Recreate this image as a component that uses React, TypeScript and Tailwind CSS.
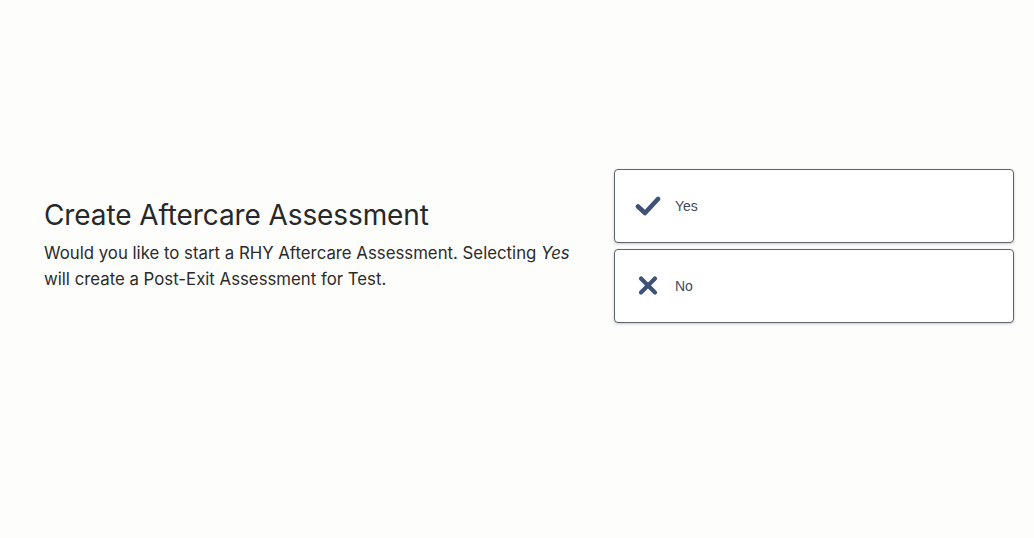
import React from "react";

function Check() {
  return (
    <svg width="26" height="22" viewBox="0 0 26 22" className="shrink-0">
      <path d="M3 11.5 L10 18 L23 4" fill="none" stroke="#3e5276" strokeWidth="4.6" strokeLinecap="round" strokeLinejoin="round" />
    </svg>
  );
}

function Cross() {
  return (
    <svg width="26" height="22" viewBox="0 0 26 22" className="shrink-0">
      <path d="M6 3.5 L20 17.5 M20 3.5 L6 17.5" fill="none" stroke="#3e5276" strokeWidth="4.2" strokeLinecap="round" />
    </svg>
  );
}

export default function App() {
  return (
    <div className="w-[1034px] h-[538px] bg-[#fdfdfc] flex items-start pt-[169px] pl-[44px] pr-[20px]" style={{ fontFamily: "Inter, 'Open Sans', sans-serif" }}>
      <div className="flex-1 flex flex-col pt-[29px] pr-[28px] text-[#282828]">
        <h1 className="text-[28px] leading-[34px] font-normal tracking-[-0.1px]">Create Aftercare Assessment</h1>
        <p className="mt-[8px] text-[16.8px] leading-[26px] text-[#2b2b2b]">
          Would you like to start a RHY Aftercare Assessment. Selecting <em>Yes</em> will create a Post-Exit Assessment for Test.
        </p>
      </div>
      <div className="w-[400px] flex flex-col gap-[6px]">
        <button className="h-[74px] w-full flex items-center gap-[14px] pl-[20px] rounded-[4px] border border-[#5b636d] bg-white shadow-[0_1px_3px_rgba(0,0,0,0.2)] text-[14px] text-[#3e4a5c]" style={{ fontFamily: "'Liberation Sans', Arial, sans-serif" }}>
          <Check />
          <span>Yes</span>
        </button>
        <button className="h-[74px] w-full flex items-center gap-[14px] pl-[20px] rounded-[4px] border border-[#5b636d] bg-white shadow-[0_1px_3px_rgba(0,0,0,0.2)] text-[14px] text-[#3e4a5c]" style={{ fontFamily: "'Liberation Sans', Arial, sans-serif" }}>
          <Cross />
          <span>No</span>
        </button>
      </div>
    </div>
  );
}
